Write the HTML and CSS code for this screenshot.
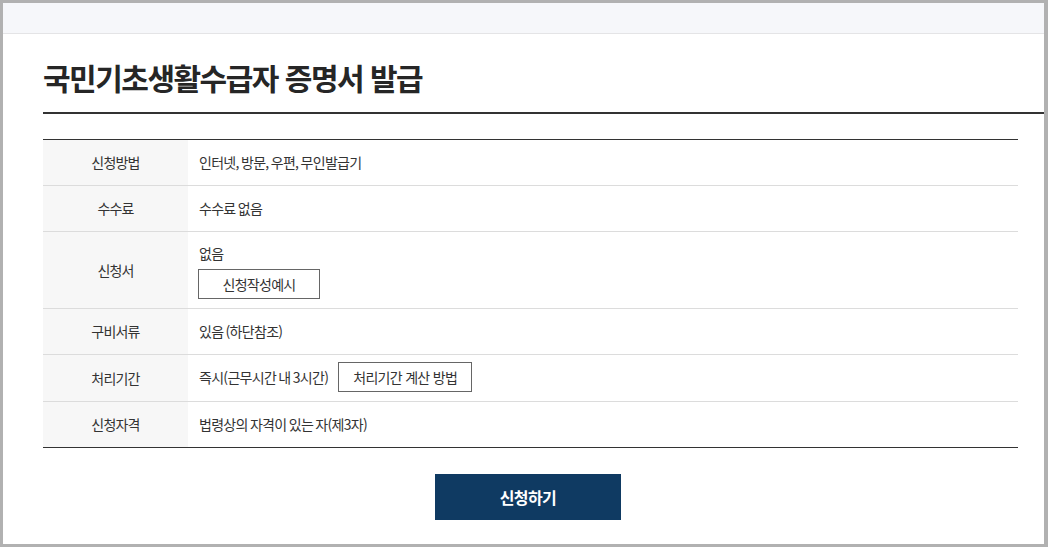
FILE: index.html
```html
<!DOCTYPE html>
<html lang="ko">
<head>
<meta charset="utf-8">
<title>국민기초생활수급자 증명서 발급</title>
<link rel="stylesheet" href="styles.css">
</head>
<body>
<div class="frame">
  <div class="topband"></div>
  <main class="content">
    <h1 class="title">국민기초생활수급자 증명서 발급</h1>
    <div class="info">
      <div class="row">
        <div class="label">신청방법</div>
        <div class="value">인터넷, 방문, 우편, 무인발급기</div>
      </div>
      <div class="row">
        <div class="label">수수료</div>
        <div class="value">수수료 없음</div>
      </div>
      <div class="row">
        <div class="label">신청서</div>
        <div class="value stack">
          <span class="line">없음</span>
          <span class="btn btn-wide">신청작성예시</span>
        </div>
      </div>
      <div class="row">
        <div class="label">구비서류</div>
        <div class="value">있음 (하단참조)</div>
      </div>
      <div class="row">
        <div class="label">처리기간</div>
        <div class="value inline">
          <span class="line">즉시(근무시간 내 3시간)</span>
          <span class="btn">처리기간 계산 방법</span>
        </div>
      </div>
      <div class="row">
        <div class="label">신청자격</div>
        <div class="value">법령상의 자격이 있는 자(제3자)</div>
      </div>
    </div>
    <div class="actions">
      <span class="apply">신청하기</span>
    </div>
  </main>
</div>
</body>
</html>
```

FILE: styles.css
```css
* { box-sizing: border-box; }

html, body {
  margin: 0;
  padding: 0;
  background: #ffffff;
}

body {
  font-family: "Noto Sans CJK KR", "Noto Sans", sans-serif;
  color: #333333;
}

.frame {
  width: 1048px;
  height: 547px;
  border-top: 3px solid #b1b1b1;
  border-left: 3px solid #b1b1b1;
  border-right: 4px solid #b1b1b1;
  border-bottom: 3px solid #b1b1b1;
  background: #ffffff;
  display: flex;
  flex-direction: column;
  overflow: hidden;
}

.topband {
  height: 31px;
  flex: none;
  background: #f6f7fa;
  border-bottom: 1px solid #e4e4e6;
}

.content {
  padding-left: 40px;
}

.title {
  margin: 0;
  padding-top: 23px;
  height: 80px;
  font-size: 30px;
  line-height: 40px;
  font-weight: 700;
  letter-spacing: -1.5px;
  color: #262626;
  border-bottom: 2px solid #333333;
}

.info {
  margin-top: 25px;
  margin-right: 26px;
  border-top: 1px solid #333333;
  border-bottom: 1px solid #333333;
}

.row {
  display: flex;
  border-bottom: 1px solid #dcdcdc;
}

.row:last-child {
  border-bottom: none;
}

.label {
  flex: none;
  width: 145px;
  background: #f7f7f7;
  display: flex;
  align-items: center;
  justify-content: center;
  font-size: 14px;
  line-height: 21px;
  letter-spacing: -0.8px;
  color: #333333;
}

.value {
  flex: 1;
  padding: 12px 11px;
  font-size: 14px;
  line-height: 21px;
  letter-spacing: -0.7px;
  word-spacing: -1px;
  color: #333333;
}

.value.stack {
  display: flex;
  flex-direction: column;
  align-items: flex-start;
  gap: 5px;
  padding-top: 11px;
  padding-bottom: 9px;
}

.value.inline {
  display: flex;
  align-items: center;
  gap: 10px;
  padding-top: 7px;
  padding-bottom: 9px;
}

.btn {
  display: inline-flex;
  align-items: center;
  justify-content: center;
  height: 30px;
  padding: 0 14px;
  border: 1px solid #666666;
  background: #ffffff;
  color: #333333;
  font-size: 14px;
  letter-spacing: -0.7px;
  word-spacing: 0;
}

.btn-wide {
  width: 122px;
  margin-left: -1px;
}

.actions {
  margin-right: 26px;
  padding-top: 26px;
  display: flex;
  justify-content: center;
}

.apply {
  display: flex;
  align-items: center;
  justify-content: center;
  width: 186px;
  height: 46px;
  margin-right: 5px;
  background: #0f3a62;
  color: #ffffff;
  font-size: 16px;
  font-weight: 700;
  letter-spacing: -0.6px;
}
```
